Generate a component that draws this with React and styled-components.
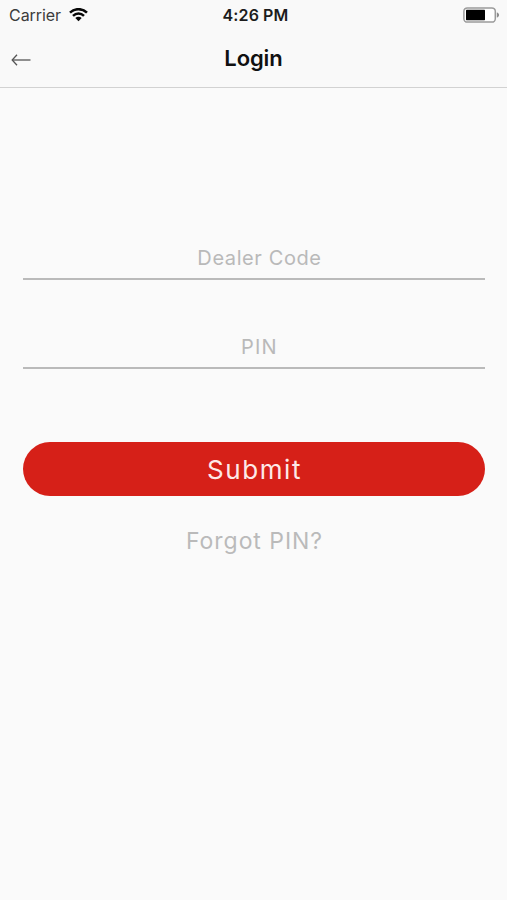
import React from "react";
import styled, { createGlobalStyle } from "styled-components";

const GlobalStyle = createGlobalStyle`
  * {
    box-sizing: border-box;
  }
  body {
    margin: 0;
    background-color: #fafafa;
    font-family: Inter, "Liberation Sans", sans-serif;
  }
`;

const Screen = styled.div`
  width: 100%;
  height: 100vh;
  display: flex;
  flex-direction: column;
  overflow: hidden;
`;

const Header = styled.header`
  height: 88px;
  background-color: #f9f9f9;
  border-bottom: 1px solid #d2d2d2;
`;

const StatusBar = styled.div`
  height: 30px;
  padding: 0 7px 0 9px;
  display: grid;
  grid-template-columns: 1fr auto 1fr;
  align-items: center;
`;

const Carrier = styled.div`
  display: flex;
  align-items: center;
  gap: 8px;
  color: #3c3c3c;
  font-size: 16px;
  letter-spacing: -0.05px;
`;

const Time = styled.div`
  color: #1c1c1c;
  font-size: 16px;
  font-weight: 600;
  letter-spacing: 0.1px;
  padding-left: 2px;
`;

const Battery = styled.div`
  display: flex;
  justify-content: flex-end;
`;

const NavBar = styled.div`
  height: 55px;
  padding: 0 11px;
  display: grid;
  grid-template-columns: 1fr auto 1fr;
  align-items: center;
`;

const BackButton = styled.button`
  width: 20px;
  height: 14px;
  margin-top: 4px;
  padding: 0;
  border: 0;
  background: none;
  display: flex;
`;

const Title = styled.h1`
  margin: 0;
  color: #111;
  font-size: 22px;
  font-weight: 600;
  line-height: 28px;
  letter-spacing: -0.1px;
`;

const Form = styled.form`
  padding: 147px 22px 0 23px;
  display: flex;
  flex-direction: column;
`;

const Field = styled.input`
  width: 100%;
  height: 45px;
  margin-bottom: 44px;
  padding: 2px 0 0 11px;
  border: 0;
  border-bottom: 2px solid #bababa;
  outline: none;
  background: none;
  color: #555;
  font-family: inherit;
  font-size: 20px;
  text-align: center;
  letter-spacing: ${(props) => props.$spacing};

  &::placeholder {
    color: #b9b9b9;
    opacity: 1;
  }
`;

const SubmitButton = styled.button`
  height: 54px;
  margin-top: 28.5px;
  padding: 1px 0 0 1px;
  border: 0;
  border-radius: 27px;
  background-color: #d62018;
  color: #fde9e7;
  font-family: inherit;
  font-size: 26px;
  font-weight: 400;
  letter-spacing: 1.6px;
`;

const ForgotLink = styled.a`
  align-self: center;
  margin-top: 30.5px;
  padding-left: 1px;
  color: #bababa;
  font-size: 23px;
  font-weight: 400;
  line-height: 30px;
  letter-spacing: 0.95px;
`;

function WifiIcon() {
  return (
    <svg width="19" height="14" viewBox="0 0 19 14" fill="none" stroke="#080808" strokeWidth="2.5">
      <path d="M1 4.6C5.7 0 13.3 0 18 4.6" />
      <path d="M4 7.9C7.2 4.8 11.8 4.8 15 7.9" />
      <path d="M9.5 13.3L6.3 10.1C8.1 8.4 10.9 8.4 12.7 10.1Z" fill="#080808" stroke="none" />
    </svg>
  );
}

function BatteryIcon() {
  return (
    <svg width="37" height="16" viewBox="0 0 37 16">
      <rect x="0.9" y="0.9" width="31.4" height="14.2" rx="3.4" fill="#fff" stroke="#9b9b9b" strokeWidth="1.5" />
      <rect x="3" y="2.8" width="19" height="10.4" rx="0.6" fill="#000" />
      <path d="M33.8 5.5C36.8 6 36.8 10 33.8 10.5Z" fill="#8c8c8c" />
    </svg>
  );
}

function BackIcon() {
  return (
    <svg width="20" height="14" viewBox="0 0 20 14" fill="none" stroke="#555" strokeWidth="1.3">
      <path d="M19.5 7H1.5" />
      <path d="M6 1.8L1.2 7L6 12.2" />
    </svg>
  );
}

export default function App() {
  return (
    <Screen>
      <GlobalStyle />
      <Header>
        <StatusBar>
          <Carrier>
            Carrier
            <WifiIcon />
          </Carrier>
          <Time>4:26 PM</Time>
          <Battery>
            <BatteryIcon />
          </Battery>
        </StatusBar>
        <NavBar>
          <BackButton type="button" aria-label="Back">
            <BackIcon />
          </BackButton>
          <Title>Login</Title>
        </NavBar>
      </Header>
      <Form onSubmit={(e) => e.preventDefault()}>
        <Field placeholder="Dealer Code" $spacing="0.6px" />
        <Field placeholder="PIN" $spacing="1.2px" />
        <SubmitButton type="submit">Submit</SubmitButton>
        <ForgotLink>Forgot PIN?</ForgotLink>
      </Form>
    </Screen>
  );
}
